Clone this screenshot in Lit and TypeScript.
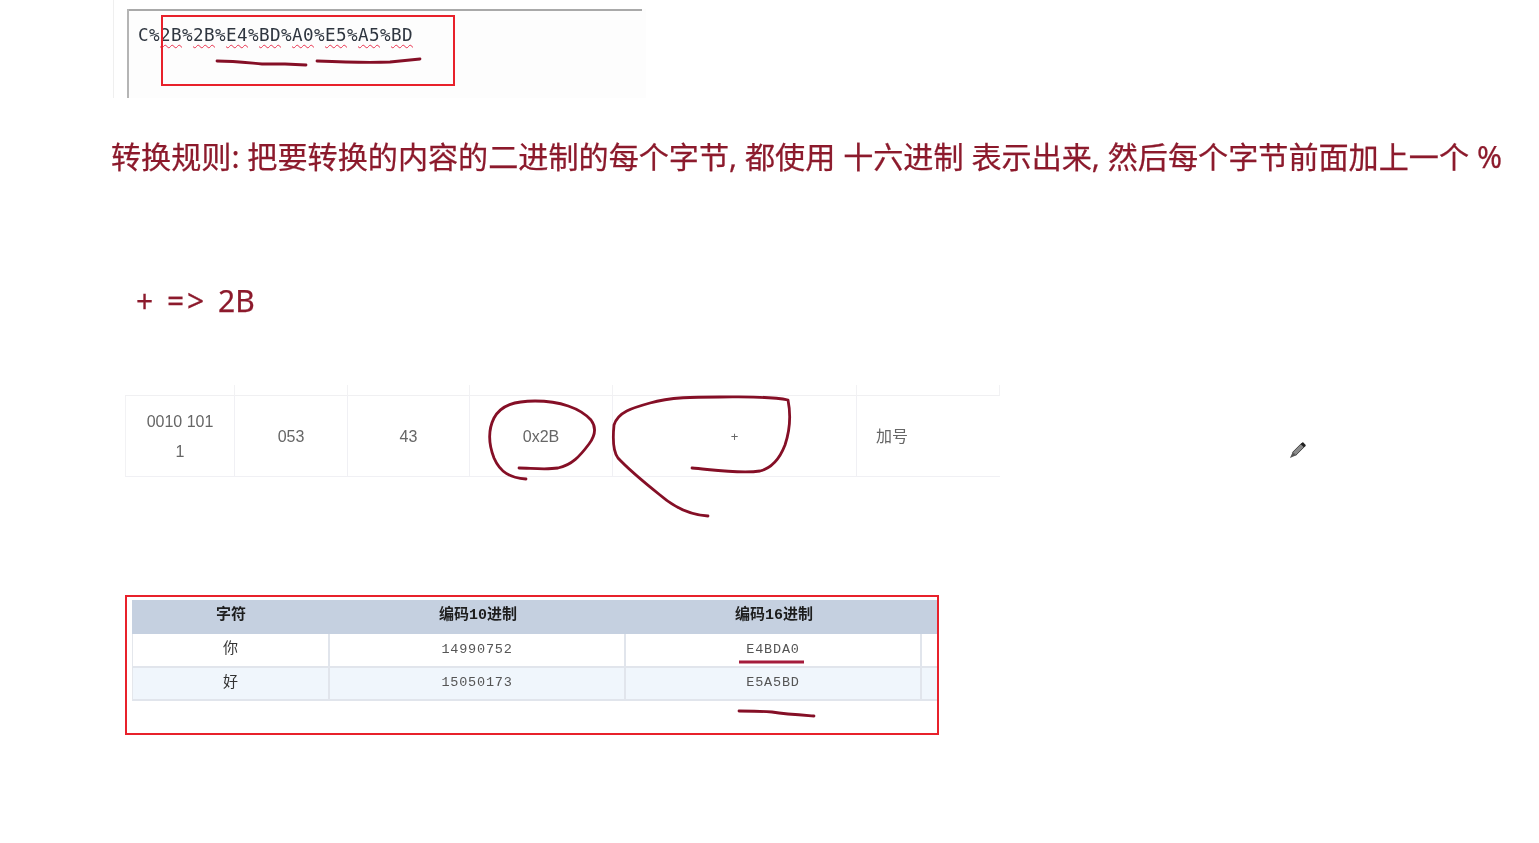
import { LitElement, html, css, svg } from "lit";
import { customElement } from "lit/decorators.js";

const encoded = ["2B", "2B", "E4", "BD", "A0", "E5", "A5", "BD"];
const codes = [
  ["你", "14990752", "E4BDA0"],
  ["好", "15050173", "E5A5BD"],
];
const ink = [
  "M217 61 C235 61 250 63 262 64 L285 64 L306 65",
  "M317 61 C340 62 365 63 390 62 C400 61 410 60 420 59",
  "M526 479 C510 478 500 472 494 458 C489 445 488 430 494 418 C501 405 515 401 535 401 C560 401 580 408 591 420 C597 428 595 436 589 444 C580 456 572 465 558 468 C545 470 530 468 519 468",
  "M708 516 C690 515 675 508 660 495 C645 483 630 471 618 458 C612 450 613 435 614 425 C618 412 632 408 650 403 C670 397 695 397 720 397 C745 397 770 396 788 400 C791 415 790 430 785 445 C780 458 772 468 760 471 C740 474 715 470 692 468",
  "M739 711 C750 711 762 711 772 712 C785 714 800 715 814 716",
];

@customElement("app-root")
export class AppRoot extends LitElement {
  static styles = css`
    :host {
      display: block;
      position: relative;
      width: 1539px;
      height: 843px;
      overflow: hidden;
      background: #fff;
      font-family: "Liberation Sans", "Noto Sans CJK SC", sans-serif;
    }
    .page {
      filter: blur(0.45px);
      height: 100%;
    }
    .editor-wrap {
      margin-left: 113px;
      height: 98px;
      padding: 9px 0 0 13px;
      border-left: 1px solid #efefef;
      box-sizing: border-box;
    }
    .editor {
      width: 519px;
      height: 89px;
      box-sizing: border-box;
      padding: 14px 0 0 9px;
      background: linear-gradient(#a9a9a9, #a9a9a9) top left / 513px 2px no-repeat, #fdfdfd;
      border-left: 2px solid #b5b5b5;
      font: 17.6px/24px "DejaVu Sans Mono", monospace;
      letter-spacing: 0.4px;
      color: #2f3640;
      white-space: nowrap;
    }
    .editor span {
      text-decoration: underline wavy #e8324e 1.4px;
      text-underline-offset: 3px;
    }
    h1 {
      margin: 37px 0 0 111px;
      font: 400 30.12px/44px "Noto Sans", "Noto Sans CJK SC", sans-serif;
      -webkit-text-stroke: 0.25px #8c1a2c;
      color: #8c1a2c;
      white-space: pre;
    }
    .rule {
      margin: 101px 0 0 136px;
      font: 400 30px/42px "Noto Sans", sans-serif;
      -webkit-text-stroke: 0.25px #8c1a2c;
      color: #8c1a2c;
      white-space: pre;
    }
    .rule span {
      letter-spacing: 3px;
    }
    .ascii {
      margin: 63px 0 0 125px;
      width: 875px;
      display: grid;
      grid-template-columns: 110px 113px 122px 143px 244px 143px;
      color: #666;
      font-size: 16px;
      line-height: 30px;
      text-align: center;
    }
    .stub {
      height: 10px;
      border-right: 1px solid #f2f2f4;
      border-bottom: 1px solid #f0f0f2;
    }
    .stub:last-of-type, .cell:last-child {
      border-right: 0;
    }
    .cell {
      height: 81px;
      padding-top: 1px;
      display: flex;
      align-items: center;
      justify-content: center;
      box-sizing: border-box;
      border-right: 1px solid #f0f0f4;
      border-bottom: 1px solid #f0f0f4;
    }
    .cell.first { border-left: 1px solid #f2f2f4; padding: 1px 18px 0; }
    .cell.last { justify-content: flex-start; padding-left: 19px; font-size: 16px; }
    .cell.plus { font-size: 13px; }
    .framed {
      margin: 118px 0 0 125px;
      width: 814px;
      height: 140px;
      box-sizing: border-box;
      border: 2px solid #e8212b;
      padding: 3px 0 0 5px;
    }
    .codes {
      display: grid;
      grid-template-columns: 198px 296px 296px 15px;
      font-size: 14px;
      text-align: center;
    }
    .codes > div {
      display: flex;
      align-items: center;
      justify-content: center;
      height: 33.5px;
      box-sizing: border-box;
    }
    .head {
      background: #c5d0e0;
      color: #1d1d1d;
      font: 700 15px "Liberation Mono", "Noto Sans CJK SC", monospace;
      height: 34px !important;
      padding-bottom: 8px;
    }
    .row {
      border-right: 2px solid #e1e5ec;
      border-bottom: 2px solid #e1e5ec;
      color: #333;
    }
    .row.lead {
      border-left: 1px solid #e4e7ec;
      font-size: 15px;
      padding-bottom: 6px;
    }
    .row.tail { border-right: 0; }
    .row.alt { background: #f0f6fc; }
    .mono {
      font: 13.5px "Liberation Mono", monospace;
      letter-spacing: 0.8px;
      color: #555;
      padding-bottom: 1px;
    }
    .overlay {
      position: absolute;
      inset: 0;
      pointer-events: none;
    }
    .ink {
      fill: none;
      stroke: #850f26;
      stroke-width: 2.8;
      stroke-linecap: round;
      stroke-linejoin: round;
    }
    .box {
      fill: none;
      stroke: #e8212b;
      stroke-width: 2;
    }
    .bar {
      stroke: #a51c3c;
      stroke-width: 2.8;
    }
    .pencil-body { fill: #8a8a8a; stroke: #333; stroke-width: 0.8; }
    .pencil-tip { fill: #555; }
    .pencil-cap { fill: #222; }
  `;

  render() {
    return html`
      <div class="page">
        <div class="editor-wrap">
          <div class="editor">C%${encoded.map(
            (e, i) => html`<span>${e}</span>${i < encoded.length - 1 ? "%" : ""}`
          )}</div>
        </div>
        <h1>转换规则: 把要转换的内容的二进制的每个字节, 都使用 十六进制 表示出来, 然后每个字节前面加上一个 %</h1>
        <div class="rule"><span>+ =&gt; </span>2B</div>
        <div class="ascii">
          ${[0, 1, 2, 3, 4, 5].map(() => html`<div class="stub"></div>`)}
          <div class="cell first">0010 101 1</div>
          <div class="cell">053</div>
          <div class="cell">43</div>
          <div class="cell">0x2B</div>
          <div class="cell plus">+</div>
          <div class="cell last">加号</div>
        </div>
        <div class="framed">
          <div class="codes">
            <div class="head">字符</div>
            <div class="head">编码10进制</div>
            <div class="head">编码16进制</div>
            <div class="head"></div>
            ${codes.map((r, i) => {
              const alt = i % 2 ? "alt" : "";
              return html`
                <div class="row lead ${alt}">${r[0]}</div>
                <div class="row mono ${alt}">${r[1]}</div>
                <div class="row mono ${alt}">${r[2]}</div>
                <div class="row tail ${alt}"></div>
              `;
            })}
          </div>
        </div>
        <svg class="overlay" width="1539" height="843" viewBox="0 0 1539 843">
          <rect class="box" x="162" y="16" width="292" height="69"></rect>
          ${ink.map((d) => svg`<path class="ink" d=${d}></path>`)}
          <line class="bar" x1="739" y1="662" x2="804" y2="662"></line>
          <g transform="translate(1297 451) rotate(45)">
            <rect class="pencil-body" x="-2.2" y="-9" width="4.4" height="13"></rect>
            <rect class="pencil-cap" x="-2.2" y="-10.5" width="4.4" height="3"></rect>
            <path class="pencil-tip" d="M-2.2 4 L2.2 4 L0 10 Z"></path>
          </g>
        </svg>
      </div>
    `;
  }
}
